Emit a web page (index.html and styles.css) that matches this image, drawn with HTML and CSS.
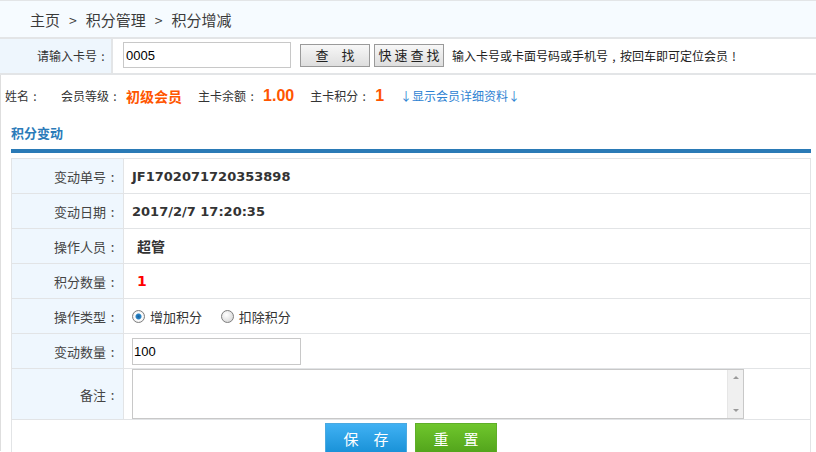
FILE: index.html
```html
<!DOCTYPE html>
<html lang="zh-CN">
<head>
<meta charset="utf-8">
<title>积分增减</title>
<link rel="stylesheet" href="styles.css">
</head>
<body>
<div class="crumb">主页<span class="sep">&gt;</span>积分管理<span class="sep">&gt;</span>积分增减</div>
<div class="search">
  <div class="search-label">请输入卡号<span class="c">:</span></div>
  <div class="search-field">
    <input class="card-input" type="text" value="0005">
    <button class="btn-gray btn-find">查　找</button>
    <button class="btn-gray btn-quick">快速查找</button>
    <span class="hint">输入卡号或卡面号码或手机号<span class="c">,</span>按回车即可定位会员<span class="c">!</span></span>
  </div>
</div>
<div class="content">
  <div class="info">
    <span class="info-name">姓名<span class="c">:</span></span>
    <span class="info-item">会员等级<span class="c">:</span></span><b class="orange lvl">初级会员</b>
    <span class="info-item">主卡余额<span class="c">:</span></span><b class="orange num">1.00</b>
    <span class="info-item">主卡积分<span class="c">:</span></span><b class="orange num">1</b>
    <a class="detail-link">↓显示会员详细资料↓</a>
  </div>
  <div class="section-title">积分变动</div>
  <div class="section-bar"></div>
  <table class="form">
    <tr><th>变动单号<span class="c">:</span></th><td class="val">JF1702071720353898</td></tr>
    <tr><th>变动日期<span class="c">:</span></th><td class="val">2017/2/7 17:20:35</td></tr>
    <tr><th>操作人员<span class="c">:</span></th><td class="val indent cjk">超管</td></tr>
    <tr><th>积分数量<span class="c">:</span></th><td class="val indent red">1</td></tr>
    <tr><th>操作类型<span class="c">:</span></th><td>
      <label class="radio-label"><span class="radio checked"></span>增加积分</label>
      <label class="radio-label"><span class="radio"></span>扣除积分</label>
    </td></tr>
    <tr><th>变动数量<span class="c">:</span></th><td><input class="qty-input" type="text" value="100"></td></tr>
    <tr class="remark-row"><th>备注<span class="c">:</span></th><td>
      <div class="remark">
        <textarea class="remark-text"></textarea>
        <div class="scroll"><span class="arrow-up"></span><span class="arrow-down"></span></div>
      </div>
    </td></tr>
    <tr class="btn-row"><td colspan="2">
      <button class="btn-save">保　存</button><button class="btn-reset">重　置</button>
    </td></tr>
  </table>
</div>
</body>
</html>
```
FILE: styles.css
```css
* { box-sizing: border-box; }
html, body { margin: 0; padding: 0; background: #fff; }
body {
  width: 816px;
  height: 452px;
  overflow: hidden;
  font-family: "Microsoft YaHei", "Noto Sans CJK SC", "Liberation Sans", sans-serif;
  color: #333;
  font-size: 12px;
}
.c {
  display: inline-block;
  width: 1em;
  text-align: center;
}
.crumb {
  height: 39px;
  border-top: 1px solid #e3e5e7;
  border-bottom: 2px solid #e3e5e7;
  background: #f6fbff;
  padding-left: 30px;
  font-size: 15px;
  line-height: 37px;
  color: #3a3a3a;
}
.crumb .sep { margin: 0 9px; font-size: 14px; }
.search {
  display: flex;
  height: 36px;
  border-bottom: 2px solid #e3e5e7;
}
.search-label {
  width: 113px;
  background: #eef6fd;
  border-right: 2px solid #e3e5e7;
  text-align: right;
  padding-right: 2px;
  line-height: 34px;
  font-size: 12px;
  color: #333;
}
.search-field {
  display: flex;
  align-items: center;
  padding-left: 10px;
  padding-bottom: 2px;
}
.card-input {
  width: 168px;
  height: 26px;
  border: 1px solid #c8c8c8;
  padding: 0 2px;
  font-family: "Liberation Sans", sans-serif;
  font-size: 13px;
  color: #000;
  outline: none;
}
.btn-gray {
  height: 23px;
  width: 70px;
  border: 1px solid #9a9a9a;
  background: linear-gradient(#f7f7f7, #dedede);
  font-family: "Noto Sans CJK SC", sans-serif;
  font-size: 13px;
  color: #222;
  padding: 0;
  line-height: 20px;
}
.btn-find { margin-left: 9px; }
.btn-quick { margin-left: 4px; letter-spacing: 3px; padding-left: 3px; }
.hint {
  margin-left: 8px;
  font-size: 12px;
  color: #222;
}
.content {
  border-left: 1px solid #dedede;
  height: 376px;
}
.info {
  display: flex;
  align-items: center;
  height: 41px;
  padding-left: 4px;
  margin-bottom: 3px;
}
.info-name { margin-right: 20px; }
.info-item { margin-right: 5px; }
.orange { color: #ff5500; }
.lvl { font-size: 14px; margin-right: 16px; }
.num { font-size: 16px; margin-right: 16px; font-family: "Liberation Sans", sans-serif; }
.detail-link { color: #2d82d2; font-size: 12px; margin-left: 0; }
.section-title {
  margin-left: 10px;
  height: 28px;
  line-height: 28px;
  font-weight: bold;
  font-size: 13px;
  color: #2b7bb9;
}
.section-bar {
  margin-left: 10px;
  width: 800px;
  height: 4px;
  background: #2a7ab6;
  margin-top: 2px;
}
.form {
  margin-left: 10px;
  margin-top: 5px;
  width: 800px;
  border-collapse: collapse;
}
.form th, .form td {
  border: 1px solid #e2e4e6;
  height: 35px;
  padding: 0;
}
.form th {
  width: 112px;
  background: #eff7fe;
  font-weight: normal;
  text-align: right;
  padding-right: 4px;
  font-size: 13px;
  color: #444;
}
.form td { padding-left: 8px; }
.val {
  font-weight: bold;
  font-family: "DejaVu Sans", sans-serif;
  font-size: 13px;
  color: #333;
}
.cjk { font-family: "Noto Sans CJK SC", sans-serif; font-size: 14px; }
.indent { padding-left: 13px !important; }
.red { color: #ff0000; font-size: 14px; }
.radio-label {
  display: inline-flex;
  align-items: center;
  font-size: 13px;
  color: #333;
  margin-right: 16px;
}
.radio {
  width: 13px;
  height: 13px;
  border-radius: 50%;
  border: 1px solid #7e7e7e;
  background: radial-gradient(circle at 40% 35%, #fff, #cfcfcf);
  margin-right: 5px;
  display: inline-block;
}
.radio.checked {
  background: radial-gradient(circle, #16609e 0, #2b85c6 2.5px, #fff 3.5px, #dcdcdc 100%);
}
.qty-input {
  width: 169px;
  height: 27px;
  border: 1px solid #c8c8c8;
  padding: 0 1px;
  font-family: "Liberation Sans", sans-serif;
  font-size: 13px;
  color: #000;
  outline: none;
}
.remark-row th, .remark-row td { height: 51px; }
.remark {
  display: flex;
  width: 612px;
  height: 50px;
  border: 1px solid #c8c8c8;
}
.remark-text {
  flex: 1;
  border: none;
  resize: none;
  outline: none;
  height: 100%;
}
.scroll {
  width: 16px;
  background: #f0f0f0;
  border-left: 1px solid #e6e6e6;
  display: flex;
  flex-direction: column;
  justify-content: space-between;
  align-items: center;
  padding: 6px 0 6px;
}
.arrow-up {
  width: 0; height: 0;
  border-left: 3px solid transparent;
  border-right: 3px solid transparent;
  border-bottom: 3px solid #9a9a9a;
}
.arrow-down {
  width: 0; height: 0;
  border-left: 3px solid transparent;
  border-right: 3px solid transparent;
  border-top: 3px solid #9a9a9a;
}
.btn-row td {
  text-align: center;
  padding: 3px 0 0 0;
  vertical-align: top;
  border-bottom: none;
  height: 40px;
}
.btn-save, .btn-reset {
  width: 82px;
  height: 30px;
  border: 1px solid;
  color: #fff;
  font-family: "Noto Sans CJK SC", sans-serif;
  font-size: 15px;
  padding: 0;
  margin: 0 4px;
}
.btn-save {
  background: linear-gradient(#40b1f3, #1a92d8);
  border-color: #4aa9e0;
}
.btn-reset {
  background: linear-gradient(#6fc62c, #53a51c);
  border-color: #5fae28;
}
```
